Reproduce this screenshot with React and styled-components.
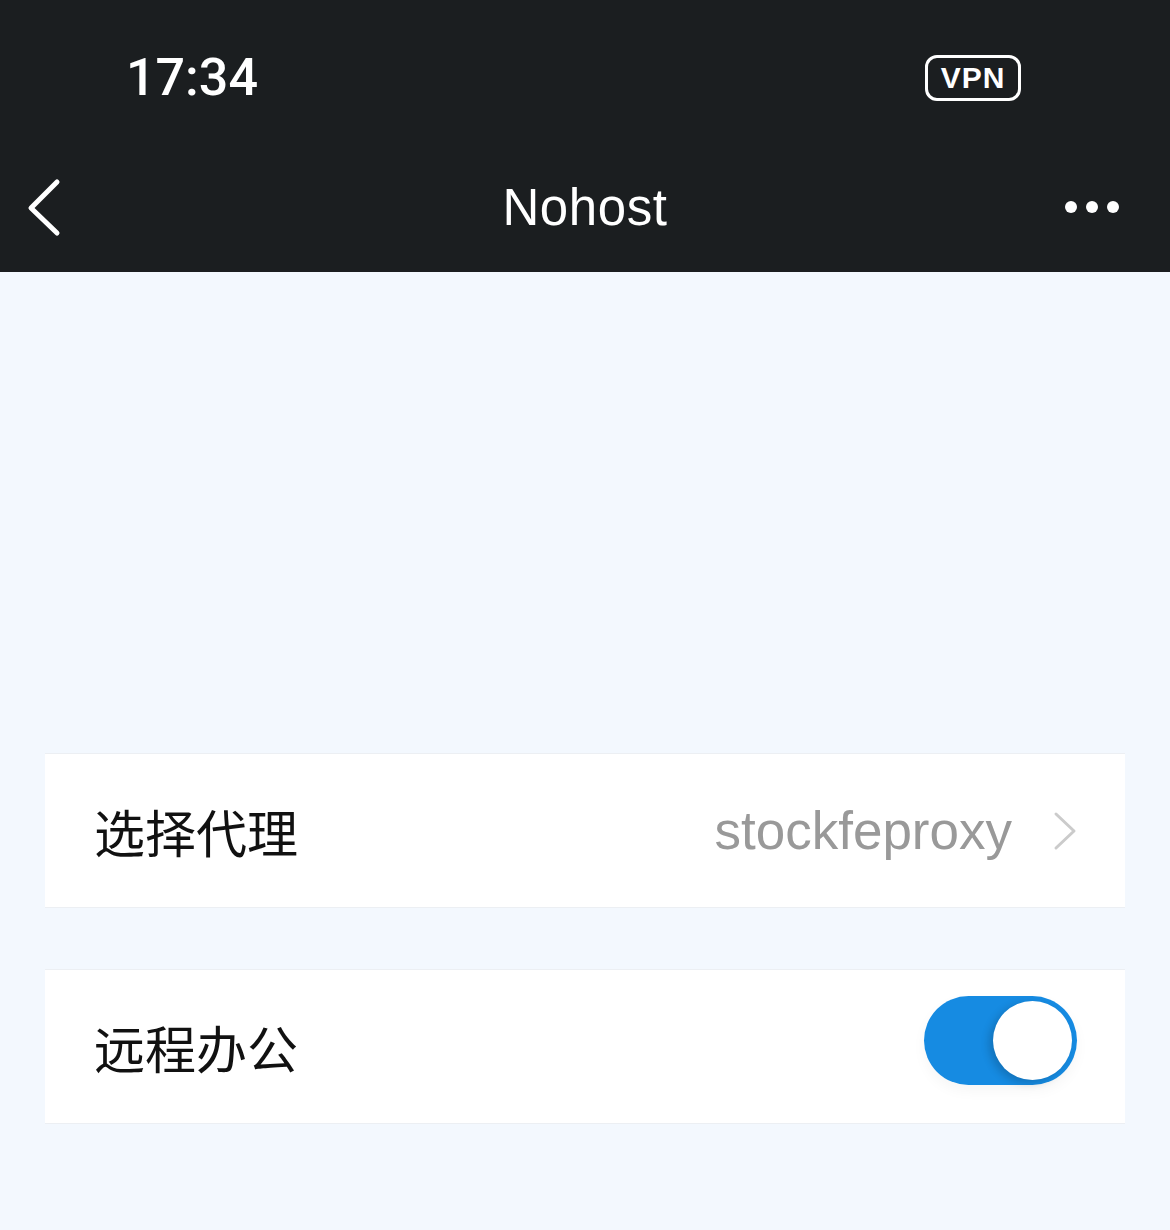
import styled, { createGlobalStyle } from "styled-components";

const GlobalStyle = createGlobalStyle`
    html, body {
        margin: 0;
        padding: 0;
        background: #f3f8fe;
    }
    body {
        font-family: "Liberation Sans", "Noto Sans CJK SC", sans-serif;
    }
`

const Page = styled.div`
    width: 1170px;
    min-height: 1230px;
    background: #f3f8fe;
`

const Header = styled.header`
    background: #1b1e20;
    color: #fff;
`

const StatusBar = styled.div`
    height: 156px;
    display: flex;
    align-items: center;
    justify-content: space-between;
    padding: 0 149px 0 126px;
    box-sizing: border-box;
`

const Time = styled.span`
    font-family: Roboto, "Liberation Sans", sans-serif;
    font-size: 52px;
    font-weight: 500;
    line-height: 1;
`

const VpnBadge = styled.span`
    width: 96px;
    height: 46px;
    box-sizing: border-box;
    border: 3px solid #fff;
    border-radius: 12px;
    display: flex;
    align-items: center;
    justify-content: center;
    font-size: 30px;
    font-weight: 700;
    letter-spacing: 1px;
`

const NavBar = styled.nav`
    height: 116px;
    padding: 0 26px 14px;
    box-sizing: border-box;
    display: grid;
    grid-template-columns: 1fr auto 1fr;
    align-items: center;
`

const Title = styled.h1`
    margin: 0;
    font-size: 51px;
    font-weight: 400;
    letter-spacing: 0.6px;
    line-height: 1;
`

const IconButton = styled.span`
    display: flex;
    justify-content: ${(p) => (p.$end ? "flex-end" : "flex-start")};
    padding-right: ${(p) => (p.$end ? 24 : 0)}px;
`

const Content = styled.main`
    padding: 481px 45px 0;
    display: flex;
    flex-direction: column;
    gap: 61px;
`

const Cell = styled.div`
    height: 155px;
    box-sizing: border-box;
    background: #fff;
    border-top: 1px solid #eceff3;
    border-bottom: 1px solid #eceff3;
    display: flex;
    align-items: center;
    justify-content: space-between;
    padding: 0 ${(p) => p.$right || 47}px 0 49px;
`

const Label = styled.span`
    font-family: "Noto Sans CJK SC", sans-serif;
    font-size: 51px;
    color: #111;
`

const Value = styled.span`
    display: flex;
    align-items: center;
    gap: 40px;
    font-size: 53px;
    color: #999;
`

const Track = styled.span`
    width: 153px;
    height: 89px;
    margin-bottom: 13px;
    border-radius: 45px;
    background: #168be2;
    display: flex;
    align-items: center;
    justify-content: ${(p) => (p.$on ? "flex-end" : "flex-start")};
    padding: 0 5px;
    box-sizing: border-box;
    box-shadow: 0 6px 14px rgba(0, 0, 0, 0.04);
`

const Knob = styled.span`
    width: 79px;
    height: 79px;
    border-radius: 50%;
    background: #fff;
    box-shadow: -4px 3px 8px rgba(0, 0, 0, 0.18);
`

const BackIcon = () => (
    <svg width="40" height="60" viewBox="0 0 40 60">
        <path d="M31 5 L5 31 L31 56" fill="none" stroke="#fff" strokeWidth="5" strokeLinecap="round" strokeLinejoin="round" />
    </svg>
)

const MoreIcon = () => (
    <svg width="56" height="14" viewBox="0 0 56 14">
        <circle cx="7" cy="7" r="6" fill="#fff" />
        <circle cx="28" cy="7" r="6" fill="#fff" />
        <circle cx="49" cy="7" r="6" fill="#fff" />
    </svg>
)

const ChevronRight = () => (
    <svg width="26" height="40" viewBox="0 0 26 40">
        <path d="M4 3 L22 20 L4 37" fill="none" stroke="#cbcbcb" strokeWidth="3" strokeLinecap="round" strokeLinejoin="round" />
    </svg>
)

const App = () => {
    return (
        <>
            <GlobalStyle />
            <Page>
                <Header>
                    <StatusBar>
                        <Time>17:34</Time>
                        <VpnBadge>VPN</VpnBadge>
                    </StatusBar>
                    <NavBar>
                        <IconButton><BackIcon /></IconButton>
                        <Title>Nohost</Title>
                        <IconButton $end><MoreIcon /></IconButton>
                    </NavBar>
                </Header>

                <Content>
                    <Cell>
                        <Label>选择代理</Label>
                        <Value>
                            stockfeproxy
                            <ChevronRight />
                        </Value>
                    </Cell>

                    <Cell $right={48}>
                        <Label>远程办公</Label>
                        <Track $on>
                            <Knob />
                        </Track>
                    </Cell>
                </Content>
            </Page>
        </>
    )
}

export default App
